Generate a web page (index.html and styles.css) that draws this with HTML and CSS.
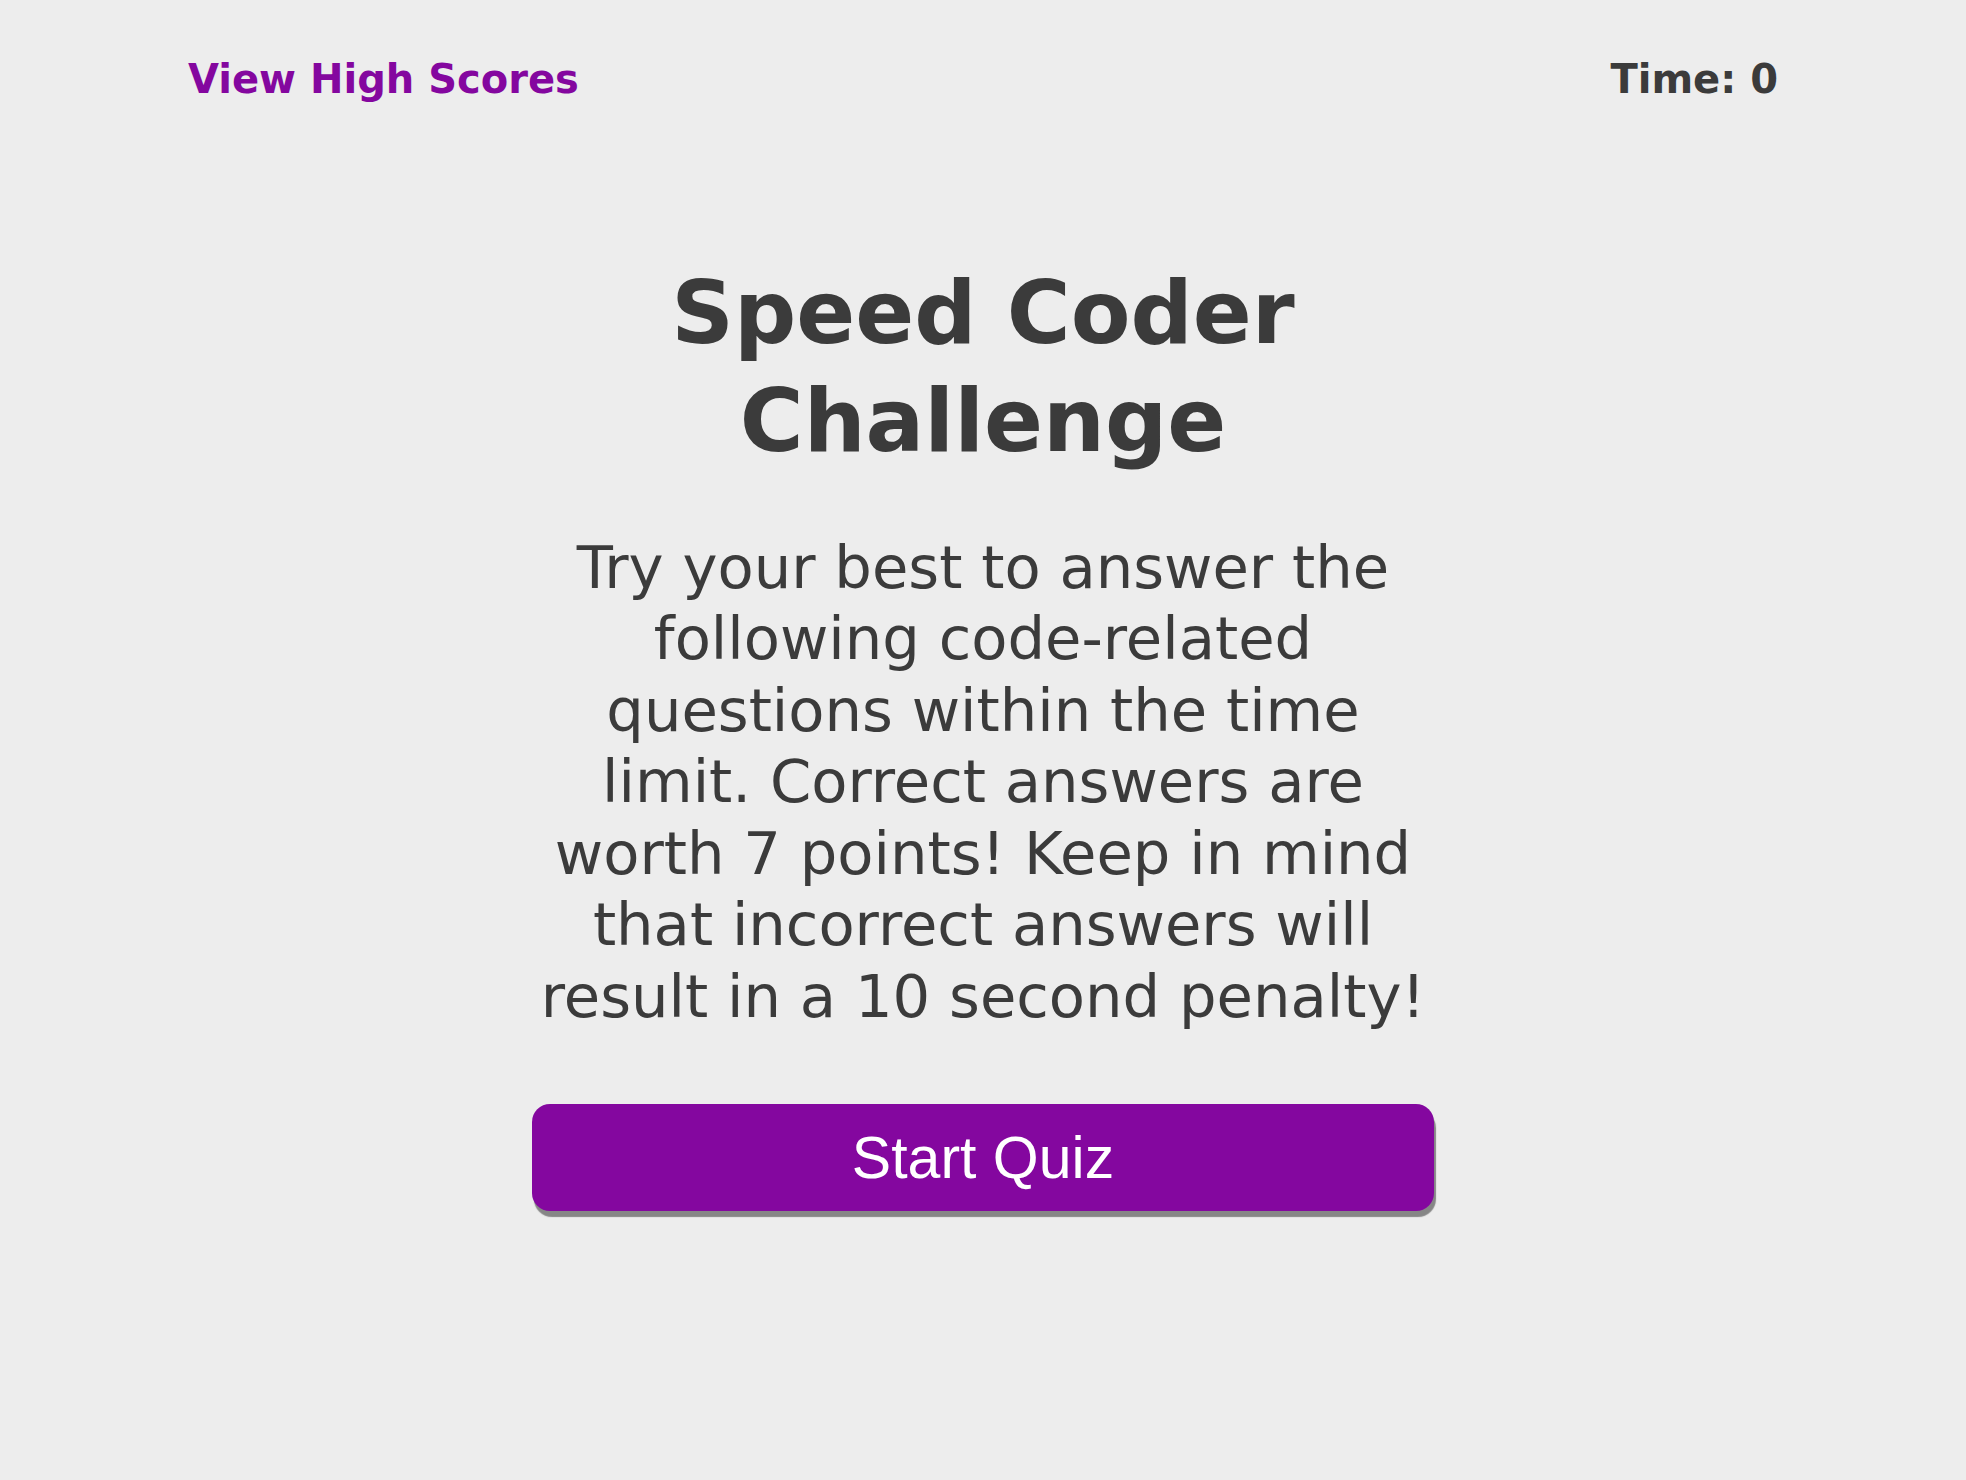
FILE: index.html
```html
<!DOCTYPE html>
<html lang="en">
<head>
<meta charset="utf-8">
<title>Speed Coder Challenge</title>
<link rel="stylesheet" href="styles.css">
</head>
<body>
  <header class="top-bar">
    <a class="scores-link" href="#">View High Scores</a>
    <span class="timer">Time: 0</span>
  </header>
  <main class="intro">
    <h1 class="intro-title">Speed Coder Challenge</h1>
    <p class="intro-text">Try your best to answer the following code-related questions within the time limit. Correct answers are worth 7 points! Keep in mind that incorrect answers will result in a 10 second penalty!</p>
    <button class="start-btn" type="button">Start Quiz</button>
  </main>
</body>
</html>
```
FILE: styles.css
```css
html, body {
  margin: 0;
  padding: 0;
}
body {
  background: #ededed;
  color: #3b3b3b;
  font-family: "DejaVu Sans", Verdana, sans-serif;
  min-height: 1480px;
}
.top-bar {
  display: flex;
  justify-content: space-between;
  align-items: center;
  padding: 56px 188px 0;
  font-size: 40px;
  font-weight: bold;
  line-height: 1.164;
}
.scores-link {
  color: #84079f;
  text-decoration: none;
}
.timer {
  color: #3b3b3b;
}
.intro {
  width: 902px;
  margin: 156px auto 0;
  display: flex;
  flex-direction: column;
  align-items: stretch;
  text-align: center;
}
.intro-title {
  margin: 0;
  font-size: 87px;
  line-height: 108px;
  font-weight: bold;
}
.intro-text {
  margin: 57px 0 0;
  font-size: 59.2px;
  line-height: 71.5px;
}
.start-btn {
  margin-top: 72px;
  height: 107px;
  border: none;
  border-radius: 18px;
  background: #84079f;
  color: #ffffff;
  font-family: "Liberation Sans", Arial, sans-serif;
  font-size: 59px;
  box-shadow: 2px 6px 1px #868686;
  cursor: pointer;
  padding: 0;
}
```
